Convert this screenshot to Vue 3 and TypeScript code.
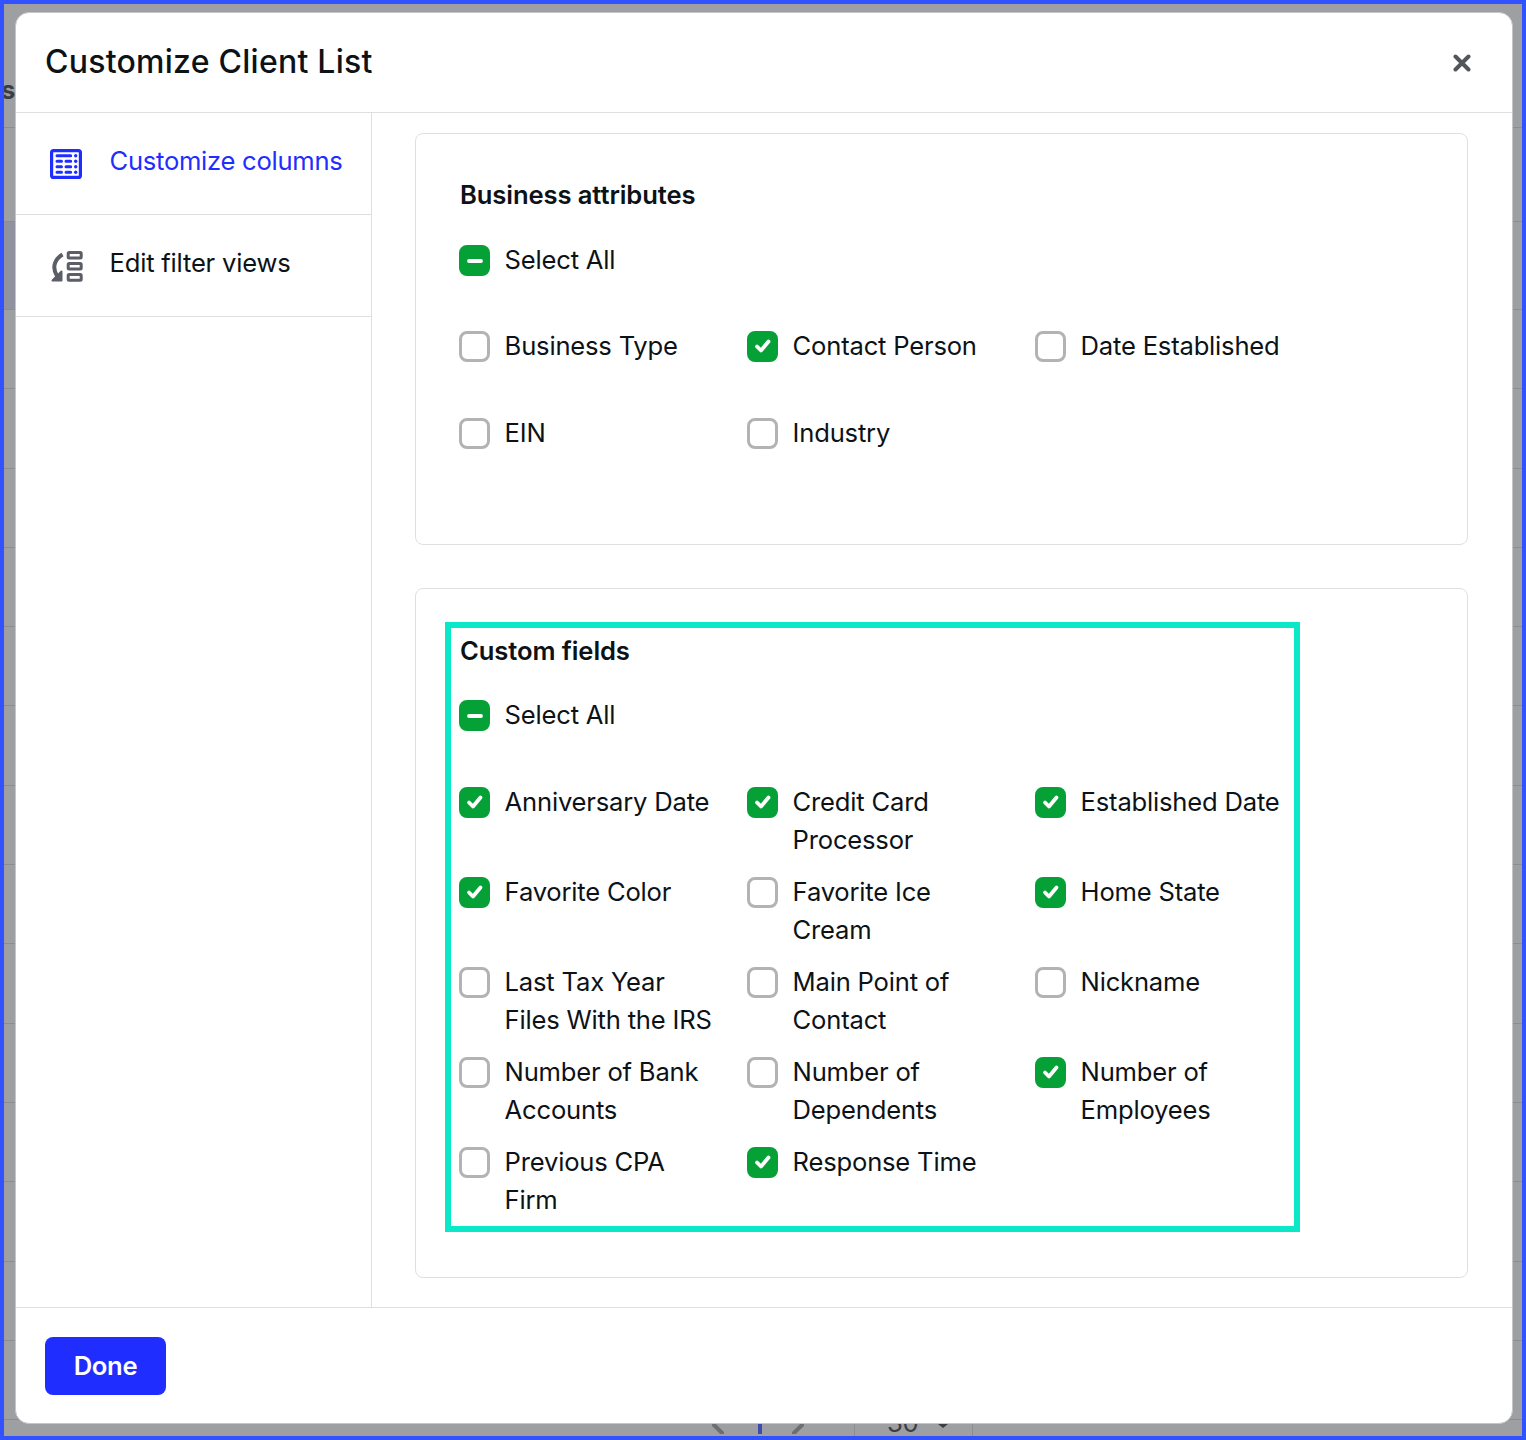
<template>
  <div class="page">
    <div class="backdrop">
      <div class="bg-row bg-head"><span class="bg-head-text">s:</span></div>
      <div class="bg-row bg-row-plain"></div>
      <div class="bg-row bg-row-active"></div>
      <div v-for="row in bgRows" :key="row" class="bg-row"></div>
      <div class="pager">
        <svg class="pager-arrow" width="12" height="14" viewBox="0 0 12 14"><path d="M2 5 L10 13" /></svg>
        <span class="pager-num"></span>
        <svg class="pager-arrow" width="12" height="14" viewBox="0 0 12 14"><path d="M10 5 L2 13" /></svg>
        <div class="pager-size"><span class="pager-value">30</span><i class="pager-caret"></i></div>
      </div>
    </div>

    <div class="modal">
      <header class="modal-head">
        <h1>Customize Client List</h1>
        <button type="button" class="close" aria-label="Close">
          <svg width="18" height="18" viewBox="0 0 18 18"><path d="M2.5 2.5 L15.5 15.5 M15.5 2.5 L2.5 15.5" /></svg>
        </button>
      </header>

      <div class="modal-body">
        <nav class="side">
          <a class="side-item active">
            <svg class="side-icon" width="32" height="30" viewBox="0 0 32 30">
              <rect x="1.6" y="1.6" width="28.8" height="26.8" rx="2" fill="none" stroke="#1f2eff" stroke-width="3.2" />
              <path d="M7 6.7 H20.7 M7 12.3 H11.5 M16 12.3 H20.7 M7 17.7 H11.5 M16 17.7 H20.7 M7 23.3 H11.5 M16 23.3 H20.7" stroke="#1f2eff" stroke-width="3" stroke-linecap="round" fill="none" />
              <circle cx="25.7" cy="6.7" r="1.7" fill="#1f2eff" />
              <circle cx="25.7" cy="12.3" r="1.7" fill="#1f2eff" />
              <circle cx="25.7" cy="17.7" r="1.7" fill="#1f2eff" />
              <circle cx="25.7" cy="23.3" r="1.7" fill="#1f2eff" />
            </svg>
            <span>Customize columns</span>
          </a>
          <a class="side-item">
            <svg class="side-icon" width="33" height="31" viewBox="0 0 33 31">
              <g fill="none" stroke="#5b5e66" stroke-width="3">
                <rect x="18.2" y="1.5" width="13" height="5.6" rx="1" />
                <rect x="18.2" y="12.5" width="13" height="5.6" rx="1" />
                <rect x="18.2" y="23.6" width="13" height="5.6" rx="1" />
                <path d="M12.5 3.5 C5 8 1.5 16 7 25" stroke-width="4" />
              </g>
              <path d="M2.5 29.5 H11.5 V20.5 Z" fill="#5b5e66" stroke="#5b5e66" stroke-width="2" stroke-linejoin="round" />
            </svg>
            <span>Edit filter views</span>
          </a>
        </nav>

        <main class="content">
          <section class="card card-business">
            <h2>Business attributes</h2>
            <label class="check check-all">
              <span class="box on"><svg width="16" height="16" viewBox="0 0 16 16"><path d="M2 8 H14" /></svg></span>
              <span>Select All</span>
            </label>
            <div class="fields fields-short">
              <label v-for="f in businessFields" :key="f.name" class="check">
                <span class="box" :class="{ on: f.on }">
                  <svg v-if="f.on" width="18" height="16" viewBox="0 0 18 16"><path d="M3 8.5 L7 12.5 L14.5 3.5" /></svg>
                </span>
                <span class="name">{{ f.name }}</span>
              </label>
            </div>
          </section>

          <section class="card card-custom">
            <div class="highlight">
              <h2>Custom fields</h2>
              <label class="check check-all">
                <span class="box on"><svg width="16" height="16" viewBox="0 0 16 16"><path d="M2 8 H14" /></svg></span>
                <span>Select All</span>
              </label>
              <div class="fields fields-tall">
                <label v-for="f in customFields" :key="f.name" class="check">
                  <span class="box" :class="{ on: f.on }">
                    <svg v-if="f.on" width="18" height="16" viewBox="0 0 18 16"><path d="M3 8.5 L7 12.5 L14.5 3.5" /></svg>
                  </span>
                  <span class="name">{{ f.name }}</span>
                </label>
              </div>
            </div>
          </section>
        </main>
      </div>

      <footer class="modal-foot">
        <button type="button" class="done">Done</button>
      </footer>
    </div>
  </div>
</template>

<script setup lang="ts">
type Field = { name: string; on: boolean };

const bgRows = Array.from({ length: 14 }, (_, i) => i);

const businessFields: Field[] = [
  { name: 'Business Type', on: false },
  { name: 'Contact Person', on: true },
  { name: 'Date Established', on: false },
  { name: 'EIN', on: false },
  { name: 'Industry', on: false }
];

const customFields: Field[] = [
  { name: 'Anniversary Date', on: true },
  { name: 'Credit Card Processor', on: true },
  { name: 'Established Date', on: true },
  { name: 'Favorite Color', on: true },
  { name: 'Favorite Ice Cream', on: false },
  { name: 'Home State', on: true },
  { name: 'Last Tax Year Files With the IRS', on: false },
  { name: 'Main Point of Contact', on: false },
  { name: 'Nickname', on: false },
  { name: 'Number of Bank Accounts', on: false },
  { name: 'Number of Dependents', on: false },
  { name: 'Number of Employees', on: true },
  { name: 'Previous CPA Firm', on: false },
  { name: 'Response Time', on: true }
];
</script>

<style>
html,
body {
  margin: 0;
  background: #9d9fa2;
}
</style>

<style scoped>
.page {
  position: relative;
  box-sizing: border-box;
  width: 1526px;
  height: 1440px;
  border: 4px solid #3352ff;
  overflow: hidden;
  font-family: Inter, "Liberation Sans", sans-serif;
  font-size: 25.6px;
  line-height: 38.4px;
  letter-spacing: -0.2px;
  color: #0d1216;
  background: #9d9fa2;
}

.backdrop {
  display: flex;
  flex-direction: column;
  height: 100%;
}

.bg-row {
  flex: none;
  height: 79.3px;
  border-bottom: 1px solid #8b8d91;
  box-sizing: border-box;
}

.bg-head {
  height: 124px;
  padding-top: 67px;
  font-weight: 700;
  color: #3b3e44;
  line-height: 38px;
}

.bg-head-text {
  display: block;
  margin-left: -3px;
}

.bg-row-plain {
  height: 94px;
}

.bg-row-active {
  height: 88px;
  background: linear-gradient(90deg, #9092a0 11px, transparent 11px);
}

.pager {
  position: absolute;
  left: 708px;
  top: 1416px;
  display: flex;
  align-items: flex-start;
}

.pager-arrow path {
  stroke: #6c6e72;
  stroke-width: 4;
  stroke-linecap: round;
  fill: none;
}

.pager-num {
  width: 4px;
  height: 14px;
  margin: 0 30px 0 34px;
  background: #3f4bb0;
}

.pager-size {
  margin-left: 50px;
  width: 119px;
  height: 16px;
  padding-left: 32px;
  box-sizing: border-box;
  border-left: 1px solid #8b8d91;
  border-right: 1px solid #8b8d91;
  color: #3b3e44;
  line-height: 10px;
  display: flex;
  gap: 19px;
}

.pager-value {
  margin-top: -2px;
}

.pager-caret {
  width: 0;
  height: 0;
  margin-top: 4px;
  border-left: 5px solid transparent;
  border-right: 5px solid transparent;
  border-top: 4px solid #3b3e44;
}

.modal {
  position: absolute;
  left: 11px;
  top: 8px;
  width: 1498px;
  height: 1412px;
  box-sizing: border-box;
  display: flex;
  flex-direction: column;
  background: #fff;
  border: 1px solid #c4c5c7;
  border-radius: 14px;
  overflow: hidden;
}

.modal-head {
  flex: none;
  height: 100px;
  box-sizing: border-box;
  display: flex;
  align-items: center;
  justify-content: space-between;
  padding: 0 41px 2px 29px;
  border-bottom: 1px solid #dedfe1;
}

.modal-head h1 {
  margin: 0;
  font-size: 32px;
  line-height: 48px;
  font-weight: 500;
  letter-spacing: 0.25px;
}

.close {
  display: flex;
  padding: 0;
  border: 0;
  background: none;
  margin-top: 2px;
}

.close path {
  stroke: #52555c;
  stroke-width: 4;
  stroke-linecap: round;
  fill: none;
}

.modal-body {
  flex: 1;
  display: flex;
  min-height: 0;
}

.side {
  flex: none;
  width: 356px;
  box-sizing: border-box;
  border-right: 1px solid #dedfe1;
}

.side-item {
  display: flex;
  align-items: center;
  gap: 27.5px;
  height: 102px;
  box-sizing: border-box;
  padding: 0 0 4px 34px;
  border-bottom: 1px solid #dedfe1;
}

.side-icon {
  flex: none;
  margin-top: 5px;
}

.side-item.active {
  color: #1f2eff;
  letter-spacing: -0.27px;
}

.side-item:not(.active) .side-icon {
  margin-right: -1px;
}

.content {
  flex: 1;
  padding: 20px 44px 0 43px;
  min-width: 0;
}

.card {
  box-sizing: border-box;
  width: 1053px;
  border: 1px solid #dedfe1;
  border-radius: 8px;
}

.card-business {
  height: 412px;
  margin-bottom: 43px;
  padding: 42px 44px 0;
}

.card-custom {
  height: 690px;
  padding: 33px 29px 0;
}

.card h2 {
  margin: 0 0 26.6px;
  font-size: 25.6px;
  line-height: 38.4px;
  font-weight: 600;
  letter-spacing: -0.1px;
}

.highlight {
  width: 855px;
  height: 610px;
  box-sizing: border-box;
  border: 6px solid #0ae8c8;
  padding: 4px 9px 0;
}

.card .highlight h2 {
  margin-bottom: 25.6px;
}

.check {
  display: flex;
  align-items: flex-start;
  gap: 14.6px;
}

.check-all {
  height: 38.4px;
}

.box {
  flex: none;
  box-sizing: border-box;
  width: 31px;
  height: 31px;
  margin-top: 4px;
  margin-left: -1px;
  border: 3px solid #b3b3b3;
  border-radius: 8px;
  display: flex;
  align-items: center;
  justify-content: center;
}

.box.on {
  background: #05a136;
  border-color: #05a136;
}

.box svg path {
  stroke: #fff;
  stroke-width: 3.8;
  stroke-linecap: round;
  stroke-linejoin: round;
  fill: none;
}

.fields {
  display: grid;
  grid-template-columns: repeat(3, 288px);
  margin-top: 47.5px;
}

.fields-short {
  grid-auto-rows: 86.8px;
}

.fields-tall {
  grid-auto-rows: 90px;
  margin-top: 48.5px;
}

.name {
  width: 210px;
}

.modal-foot {
  flex: none;
  height: 116px;
  box-sizing: border-box;
  padding: 29px 29px 0;
  border-top: 1px solid #dedfe1;
}

.done {
  width: 121px;
  height: 58px;
  padding: 0;
  border: 0;
  border-radius: 8px;
  background: #1f2eff;
  color: #fff;
  font: 600 25.6px/38.4px Inter, "Liberation Sans", sans-serif;
  letter-spacing: -0.3px;
}
</style>
